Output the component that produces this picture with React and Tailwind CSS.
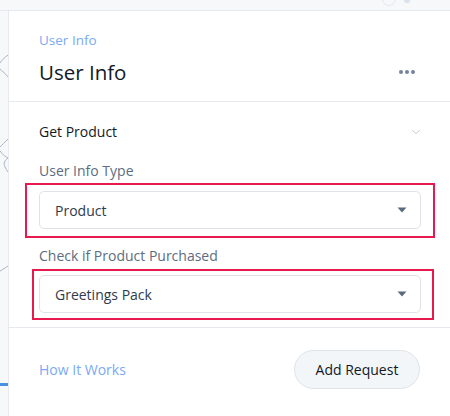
import { ChevronDown } from 'lucide-react';

const font = { fontFamily: '"Open Sans", "Liberation Sans", sans-serif' };

// Select field with a small filled caret
const SelectBox = ({ value }) => (
    <div className="flex items-center justify-between h-[38px] rounded-[5px] border border-[#dfe3e8] bg-white pl-[15px] pr-[13px]">
        <span className="text-[14px] text-[#2f3b4c]">{value}</span>
        <svg width="10" height="6" viewBox="0 0 10 6">
            <path d="M0.5 0.5 L9.5 0.5 L5 5.5 Z" fill="#5b6b7e" />
        </svg>
    </div>
);

export default function App() {
    return (
        <div className="w-[450px] h-[416px] overflow-hidden bg-[#f7f8f9] flex flex-col" style={font}>
            {/* top strip */}
            <div className="h-[11px] shrink-0 border-b border-[#e6eaee] relative">
                <div className="absolute left-[382px] -top-[8px] w-[14px] h-[14px] rounded-full border border-[#e3e6ea]"></div>
                <div className="absolute left-[404px] -top-[2px] w-[6px] h-[5px] rounded-sm bg-[#dbe2ea]"></div>
            </div>

            <div className="flex flex-1 min-h-0">
                {/* canvas edge */}
                <div className="w-[9px] shrink-0 border-r border-[#e6eaee] relative">
                    <svg width="8" height="405" viewBox="0 0 8 405" className="absolute left-0 top-0">
                        <path d="M8 44 C4 47 1 50 0 52" stroke="#a9b4c0" strokeWidth="1" fill="none" />
                        <path d="M0 58 C2 60 5 62 8 66" stroke="#a9b4c0" strokeWidth="1" fill="none" />
                        <path d="M8 128 C5 131 2 134 0 136" stroke="#a9b4c0" strokeWidth="1" fill="none" />
                        <path d="M0 140 C3 144 6 146 8 147 C5 149 3 152 5 156 C6 158 7 160 8 161" stroke="#a9b4c0" strokeWidth="1" fill="none" />
                        <path d="M8 255 C5 257 2 259 0 260" stroke="#a9b4c0" strokeWidth="1" fill="none" />
                        <rect x="0" y="372" width="8" height="3" fill="#4a90e2" />
                    </svg>
                </div>

                {/* panel */}
                <div className="flex-1 bg-white flex flex-col">
                    <div className="px-[30px] pt-[20px] h-[91px] border-b border-[#e6eaee] shrink-0">
                        <div className="text-[13.5px] leading-[18px] text-[#7aa9f5]">User Info</div>
                        <div className="flex items-center justify-between mt-[9px]">
                            <div className="text-[20.5px] leading-[28px] text-[#111827]">User Info</div>
                            <div className="flex gap-[2px] mr-[5px]">
                                <span className="w-[4px] h-[4px] rounded-full bg-[#74849a]"></span>
                                <span className="w-[4px] h-[4px] rounded-full bg-[#74849a]"></span>
                                <span className="w-[4px] h-[4px] rounded-full bg-[#74849a]"></span>
                            </div>
                        </div>
                    </div>

                    <div className="h-[226px] border-b border-[#e6eaee] shrink-0 pt-[20px]">
                        <div className="flex items-center justify-between px-[30px]">
                            <div className="text-[14px] leading-[20px] font-medium text-[#111827]">Get Product</div>
                            <ChevronDown size={14} strokeWidth={1.25} className="text-[#a7b3c0] -mr-[3px]" />
                        </div>

                        <div className="px-[30px] mt-[19px] text-[14px] leading-[20px] text-[#5d6c80]">User Info Type</div>
                        <div className="ml-[16px] mr-[15px] mt-[2px] border-2 border-[#e8194f] pt-[6px] pb-[7px] pl-[12px] pr-[12px]">
                            <SelectBox value="Product" />
                        </div>

                        <div className="px-[30px] mt-[8px] text-[14px] leading-[20px] text-[#5d6c80]">Check if Product Purchased</div>
                        <div className="ml-[23px] mr-[16px] mt-[3px] border-2 border-[#e8194f] pt-[4px] pb-[5px] pl-[5px] pr-[11px]">
                            <SelectBox value="Greetings Pack" />
                        </div>
                    </div>

                    <div className="flex items-center justify-between px-[30px] pt-[22px]">
                        <span className="text-[14px] text-[#7aa9f5]">How It Works</span>
                        <button className="h-[39px] w-[126px] rounded-full border border-[#dfe4e9] bg-[#f3f6f8] text-[14px] font-medium text-[#111827]">
                            Add Request
                        </button>
                    </div>
                </div>
            </div>
        </div>
    );
}
